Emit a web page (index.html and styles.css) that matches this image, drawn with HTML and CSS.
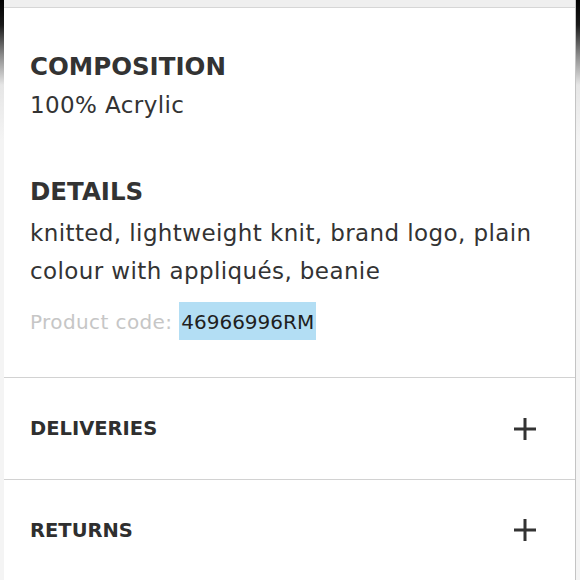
FILE: index.html
```html
<!DOCTYPE html>
<html lang="en">

<head>
    <meta charset="UTF-8">
    <meta name="viewport" content="width=device-width, initial-scale=1.0">
    <title>Product info</title>
    <link rel="stylesheet" href="styles.css">
</head>

<body>

    <div class="screen">
        <div class="edge"></div>

        <div class="panel">
            <div class="top-band"></div>

            <section class="info">
                <h2 class="info-title">COMPOSITION</h2>
                <p class="info-text">100% Acrylic</p>

                <h2 class="info-title details">DETAILS</h2>
                <p class="info-text">knitted, lightweight knit, brand logo, plain colour with appliqués, beanie</p>

                <p class="code">Product code: <span class="code-value">46966996RM</span></p>
            </section>

            <div class="row">
                <span class="row-title">DELIVERIES</span>
                <svg class="plus" width="24" height="24" viewBox="0 0 24 24">
                    <path d="M12 1v22M1 12h22" stroke="#333" stroke-width="3" fill="none" />
                </svg>
            </div>
            <div class="row">
                <span class="row-title">RETURNS</span>
                <svg class="plus" width="24" height="24" viewBox="0 0 24 24">
                    <path d="M12 1v22M1 12h22" stroke="#333" stroke-width="3" fill="none" />
                </svg>
            </div>
        </div>

        <div class="edge edge-right"></div>
    </div>

</body>

</html>
```

FILE: styles.css
```css
html,
body {
    margin: 0;
}

body {
    background: #fff;
    font-family: "DejaVu Sans", sans-serif;
    color: #333;
}

.screen {
    display: flex;
    height: 580px;
    overflow: hidden;
}

.edge {
    width: 4px;
    flex-shrink: 0;
    background: linear-gradient(to bottom, #000 0, #1a1a1a 25px, #8a8a8a 55px, #e6e6e6 85px, #f4f4f4 140px, #f4f4f4 100%);
}

.edge-right {
    border-left: 1px solid #c4c4c4;
}

.panel {
    flex: 1;
    background: #fff;
}

.top-band {
    height: 7px;
    background: #efefef;
    border-bottom: 1px solid #d6d6d6;
}

.info {
    height: 369px;
    box-sizing: border-box;
    padding: 44px 16px 0 26px;
}

.info-title {
    margin: 0;
    font-size: 24.5px;
    line-height: 30px;
    font-weight: bold;
    color: #333;
}

.details {
    margin-top: 53px;
}

.info-text {
    margin: 4px 0 0;
    font-size: 23px;
    line-height: 38px;
    letter-spacing: 0.4px;
}

.details + .info-text {
    margin-top: 7px;
}

.code {
    margin: 12px 0 0;
    font-size: 20px;
    line-height: 38px;
    letter-spacing: 0.4px;
    color: #c6c6c6;
}

.code-value {
    display: inline-block;
    padding: 9px 2px 6px;
    line-height: 23px;
    letter-spacing: 0;
    background: #b3def4;
    color: #1f1f1f;
}

.row {
    display: flex;
    align-items: center;
    justify-content: space-between;
    height: 101px;
    padding: 0 38px 0 26px;
    border-top: 1px solid #d2d2d2;
}

.row + .row {
    height: 100px;
    border-bottom: 1px solid #d2d2d2;
}

.row-title {
    font-size: 19.5px;
    font-weight: bold;
    color: #2f2f2f;
}

.plus {
    display: block;
}
```
